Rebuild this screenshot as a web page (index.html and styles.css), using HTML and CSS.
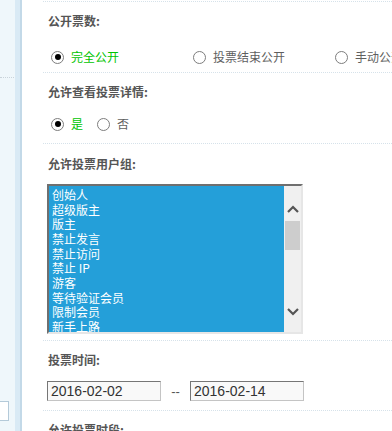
FILE: index.html
```html
<!DOCTYPE html>
<html lang="zh-CN">
<head>
<meta charset="utf-8">
<title>投票设置</title>
<link rel="stylesheet" href="styles.css">
</head>
<body>
<div class="page">
  <aside class="side">
    <div class="strip">
      <div class="side-rule"></div>
      <div class="side-box"></div>
    </div>
    <div class="band"></div>
  </aside>
  <main class="main">
    <div class="top-rule"></div>

    <section class="sec sec-1">
      <div class="label">公开票数:</div>
      <div class="radios radios-wide">
        <label class="opt"><span class="radio on"></span><span class="txt green">完全公开</span></label>
        <label class="opt"><span class="radio"></span><span class="txt">投票结束公开</span></label>
        <label class="opt"><span class="radio"></span><span class="txt">手动公开</span></label>
      </div>
    </section>

    <section class="sec sec-2">
      <div class="label">允许查看投票详情:</div>
      <div class="radios">
        <label class="opt opt-tight"><span class="radio on"></span><span class="txt green">是</span></label>
        <label class="opt opt-tight"><span class="radio"></span><span class="txt">否</span></label>
      </div>
    </section>

    <section class="sec sec-3">
      <div class="label">允许投票用户组:</div>
      <div class="listbox">
        <ul class="list">
          <li>创始人</li>
          <li>超级版主</li>
          <li>版主</li>
          <li>禁止发言</li>
          <li>禁止访问</li>
          <li>禁止 IP</li>
          <li>游客</li>
          <li>等待验证会员</li>
          <li>限制会员</li>
          <li>新手上路</li>
          <li>注册会员</li>
        </ul>
        <div class="scrollbar">
          <svg class="arrow arrow-up" width="12" height="8" viewBox="0 0 12 8"><path d="M1 7 L6 2 L11 7" fill="none" stroke="#555" stroke-width="2.2"/></svg>
          <div class="thumb"></div>
          <div class="track"></div>
          <svg class="arrow arrow-down" width="12" height="8" viewBox="0 0 12 8"><path d="M1 1 L6 6 L11 1" fill="none" stroke="#555" stroke-width="2.2"/></svg>
        </div>
      </div>
    </section>

    <section class="sec sec-4">
      <div class="label">投票时间:</div>
      <div class="dates">
        <div class="date">2016-02-02</div>
        <span class="dash">--</span>
        <div class="date">2016-02-14</div>
      </div>
    </section>

    <section class="sec sec-5">
      <div class="label">允许投票时段:</div>
    </section>
  </main>
</div>
</body>
</html>
```

FILE: styles.css
```css
html, body {
  margin: 0;
  padding: 0;
  background: #fff;
  overflow: hidden;
}
body {
  width: 392px;
  height: 431px;
  font-family: "Noto Sans CJK SC", "Liberation Sans", sans-serif;
  font-size: 12px;
  color: #666;
}
.page {
  display: flex;
  height: 431px;
  overflow: hidden;
}

/* left sidebar */
.side {
  display: flex;
  flex: 0 0 22px;
  height: 431px;
}
.strip {
  width: 15px;
  background: #eff7fb;
  display: flex;
  flex-direction: column;
}
.side-rule {
  margin-top: 77px;
  width: 14px;
  border-top: 1px dotted #c9d3da;
}
.side-box {
  margin-top: 323px;
  margin-left: -10px;
  width: 17px;
  height: 18px;
  background: #fff;
  border: 1px solid #b4cad9;
}
.band {
  width: 5px;
  background: #d9eaf5;
  border-right: 2px solid #c3d9e8;
}

/* main content */
.main {
  flex: 1 1 auto;
  min-width: 0;
  padding-left: 21px;
  overflow: hidden;
}
.top-rule {
  height: 1px;
  border-bottom: 1px dotted #d6e2ea;
}
.sec {
  border-bottom: 1px dotted #d6e2ea;
  white-space: nowrap;
}
.label {
  padding-left: 5px;
  height: 20px;
  line-height: 21px;
  font-weight: bold;
  color: #555;
}

/* radios */
.radios {
  display: flex;
  padding-left: 8px;
  height: 20px;
  align-items: center;
}
.opt {
  display: flex;
  align-items: center;
  flex: 0 0 auto;
}
.radios-wide .opt {
  width: 142px;
}
.opt-tight {
  margin-right: 14px;
}
.radio {
  position: relative;
  width: 11px;
  height: 11px;
  border: 1px solid #7d7d7d;
  border-radius: 50%;
  background: #fff;
  margin-right: 7px;
  flex: 0 0 auto;
}
.radio.on::after {
  content: "";
  position: absolute;
  left: 2.5px;
  top: 2.5px;
  width: 6px;
  height: 6px;
  border-radius: 50%;
  background: #000;
}
.txt {
  line-height: 20px;
  color: #5f5f5f;
}
.green {
  color: #00c400;
}

/* section spacing */
.sec-1 { padding-top: 8px; padding-bottom: 5px; }
.sec-1 .radios { margin-top: 17px; }
.sec-2 { padding-top: 8px; padding-bottom: 9px; }
.sec-2 .radios { margin-top: 13px; }
.sec-3 { padding-top: 9px; padding-bottom: 6px; }
.sec-4 { padding-top: 8px; padding-bottom: 9px; }
.sec-5 { padding-top: 8px; padding-bottom: 20px; }

/* list box */
.listbox {
  margin-top: 11px;
  margin-left: 4px;
  width: 252px;
  height: 146px;
  display: flex;
  border-top: 2px solid #6f6f6f;
  border-left: 2px solid #6f6f6f;
  border-right: 2px solid #e6e6e6;
  border-bottom: 2px solid #e6e6e6;
  overflow: hidden;
}
.list {
  flex: 1 1 auto;
  margin: 0;
  padding: 2px 0 0 0;
  list-style: none;
  background: #249fd9;
  color: #fff;
  overflow: hidden;
}
.list li {
  height: 14.67px;
  line-height: 14.67px;
  padding-left: 3px;
  white-space: nowrap;
}
.scrollbar {
  flex: 0 0 17px;
  background: #f0f0f0;
  display: flex;
  flex-direction: column;
  align-items: center;
}
.arrow {
  display: block;
  flex: 0 0 auto;
}
.arrow-up {
  margin-top: 19px;
}
.thumb {
  margin-top: 8px;
  width: 15px;
  height: 29px;
  background: #cdcdcd;
}
.track {
  flex: 1 1 auto;
}
.arrow-down {
  margin-bottom: 16px;
}

/* dates */
.dates {
  margin-top: 12px;
  padding-left: 4px;
  display: flex;
  align-items: center;
  height: 20px;
}
.date {
  box-sizing: border-box;
  width: 114px;
  height: 20px;
  padding-left: 3px;
  background: #f9f9f9;
  border-top: 1px solid #767676;
  border-left: 1px solid #767676;
  border-right: 1px solid #c4c4c4;
  border-bottom: 1px solid #c4c4c4;
  font-family: "Liberation Sans", Arial, sans-serif;
  font-size: 14px;
  line-height: 19px;
  color: #333;
}
.dash {
  width: 29px;
  text-align: center;
  font-family: "Liberation Sans", Arial, sans-serif;
  font-size: 13px;
  color: #555;
}
```
